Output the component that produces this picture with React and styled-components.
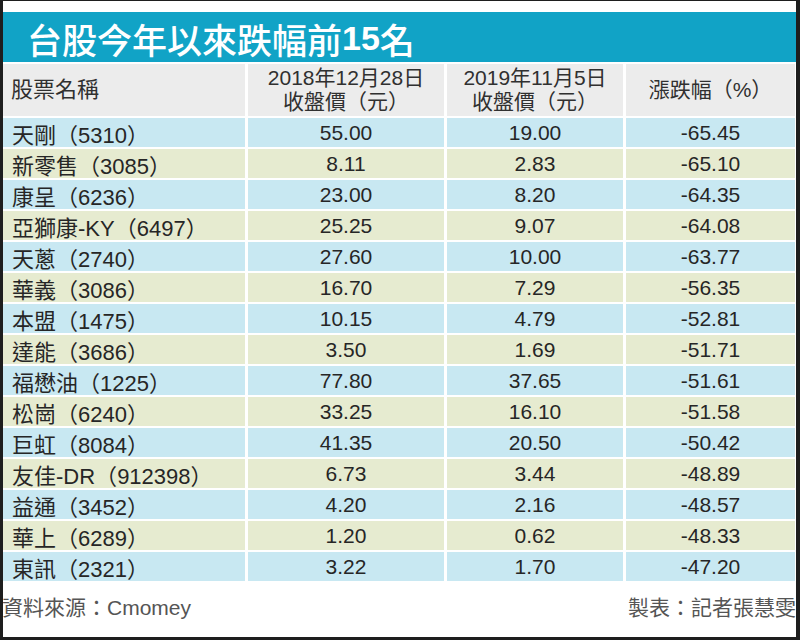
import styled, { createGlobalStyle } from "styled-components";

const GlobalStyle = createGlobalStyle`
  html, body {
    margin: 0;
    padding: 0;
    background: #ffffff;
  }
  body {
    font-family: "Liberation Sans", "Noto Sans CJK TC", sans-serif;
  }
`;

const rows = [
  ["天剛", "5310", "55.00", "19.00", "-65.45"],
  ["新零售", "3085", "8.11", "2.83", "-65.10"],
  ["康呈", "6236", "23.00", "8.20", "-64.35"],
  ["亞獅康-KY", "6497", "25.25", "9.07", "-64.08"],
  ["天蔥", "2740", "27.60", "10.00", "-63.77"],
  ["華義", "3086", "16.70", "7.29", "-56.35"],
  ["本盟", "1475", "10.15", "4.79", "-52.81"],
  ["達能", "3686", "3.50", "1.69", "-51.71"],
  ["福懋油", "1225", "77.80", "37.65", "-51.61"],
  ["松崗", "6240", "33.25", "16.10", "-51.58"],
  ["巨虹", "8084", "41.35", "20.50", "-50.42"],
  ["友佳-DR", "912398", "6.73", "3.44", "-48.89"],
  ["益通", "3452", "4.20", "2.16", "-48.57"],
  ["華上", "6289", "1.20", "0.62", "-48.33"],
  ["東訊", "2321", "3.22", "1.70", "-47.20"],
];

export default function App() {
  return (
    <>
      <GlobalStyle />
      <Frame>
        <Title>
          台股今年以來跌幅前<Bold>15</Bold>名
        </Title>
        <Table>
          <HeadCell $align="left">股票名稱</HeadCell>
          <HeadCell>
            2018年12月28日
            <br />
            收盤價（元）
          </HeadCell>
          <HeadCell>
            2019年11月5日
            <br />
            收盤價（元）
          </HeadCell>
          <HeadCell>漲跌幅（%）</HeadCell>
          {rows.map((r, i) => (
            <Row key={r[1]} $tone={i % 2 === 0 ? "blue" : "beige"}>
              <Cell $align="left">
                {r[0]}（{r[1]}）
              </Cell>
              <Cell>{r[2]}</Cell>
              <Cell>{r[3]}</Cell>
              <Cell>{r[4]}</Cell>
            </Row>
          ))}
        </Table>
        <Footer>
          <span>資料來源：Cmomey</span>
          <span>製表：記者張慧雯</span>
        </Footer>
      </Frame>
    </>
  );
}

const Frame = styled.div`
  box-sizing: border-box;
  width: 800px;
  height: 640px;
  border-style: solid;
  border-color: #1e1e1e;
  border-width: 1px 4px 3px 3px;
  padding-top: 11px;
  display: flex;
  flex-direction: column;
  overflow: hidden;
  background: #ffffff;
`;

const Title = styled.div`
  height: 50px;
  background: #11a3c6;
  color: #ffffff;
  font-family: "Noto Sans CJK TC", sans-serif;
  font-size: 35px;
  font-weight: 500;
  display: flex;
  align-items: center;
  padding-left: 24px;
  padding-top: 2px;
  box-sizing: border-box;
`;

const Bold = styled.span`
  font-family: "Liberation Sans", sans-serif;
  font-weight: 700;
  font-size: 34px;
`;

const Table = styled.div`
  display: grid;
  grid-template-columns: 242px 196px 176px 169px;
  grid-template-rows: 52px;
  grid-auto-rows: 29px;
  column-gap: 3px;
  row-gap: 2px;
  margin-top: 2px;
  color: #262626;
`;

const HeadCell = styled.div`
  background: #ececec;
  display: flex;
  flex-direction: column;
  justify-content: center;
  align-items: ${(p) => (p.$align === "left" ? "flex-start" : "center")};
  text-align: ${(p) => (p.$align === "left" ? "left" : "center")};
  padding-left: ${(p) => (p.$align === "left" ? "8px" : "0")};
  font-size: ${(p) => (p.$align === "left" ? "22px" : "21px")};
  line-height: 24px;
  color: #303030;
`;

const Row = styled.div`
  display: contents;
  --row-bg: ${(p) => (p.$tone === "blue" ? "#c8e8f2" : "#e6ebd0")};
`;

const Cell = styled.div`
  background: var(--row-bg);
  display: flex;
  align-items: center;
  justify-content: ${(p) => (p.$align === "left" ? "flex-start" : "center")};
  padding-left: ${(p) => (p.$align === "left" ? "9px" : "0")};
  font-size: ${(p) => (p.$align === "left" ? "22px" : "21px")};
  white-space: nowrap;
`;

const Footer = styled.div`
  flex: 1;
  display: flex;
  justify-content: space-between;
  align-items: flex-start;
  padding-top: 10px;
  font-size: 21px;
  color: #555555;
  margin-left: -1px;
`;
